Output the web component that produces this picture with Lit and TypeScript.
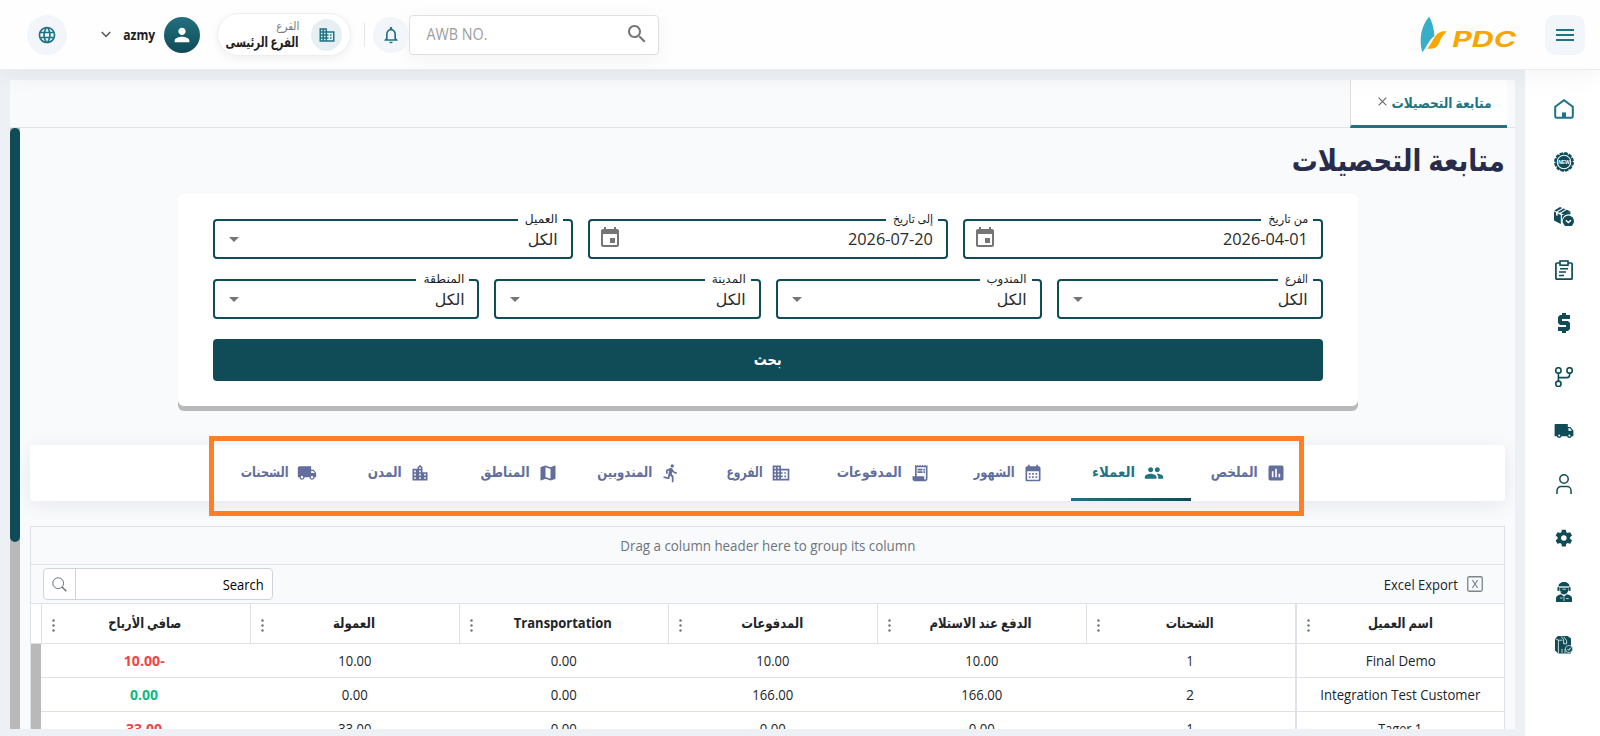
import { LitElement, html, css, svg } from 'lit';
import { customElement, property } from 'lit/decorators.js';
import { classMap } from 'lit/directives/class-map.js';

const PATHS: Record<string, string> = {
    language: 'M11.99 2C6.47 2 2 6.48 2 12s4.47 10 9.99 10C17.52 22 22 17.52 22 12S17.52 2 11.99 2zm6.93 6h-2.95c-.32-1.25-.78-2.45-1.38-3.56 1.84.63 3.37 1.91 4.33 3.56zM12 4.04c.83 1.2 1.48 2.53 1.91 3.96h-3.82c.43-1.43 1.08-2.76 1.91-3.96zM4.26 14C4.1 13.36 4 12.69 4 12s.1-1.36.26-2h3.38c-.08.66-.14 1.32-.14 2 0 .68.06 1.34.14 2H4.26zm.82 2h2.95c.32 1.25.78 2.45 1.38 3.56-1.84-.63-3.37-1.9-4.33-3.56zm2.95-8H5.08c.96-1.66 2.49-2.93 4.33-3.56C8.81 5.55 8.35 6.75 8.03 8zM12 19.96c-.83-1.2-1.48-2.53-1.91-3.96h3.82c-.43 1.43-1.08 2.76-1.91 3.96zM14.34 14H9.66c-.09-.66-.16-1.32-.16-2 0-.68.07-1.35.16-2h4.68c.09.65.16 1.32.16 2 0 .68-.07 1.34-.16 2zm.25 5.56c.6-1.11 1.06-2.31 1.38-3.56h2.95c-.96 1.65-2.49 2.93-4.33 3.56zM16.36 14c.08-.66.14-1.32.14-2 0-.68-.06-1.34-.14-2h3.38c.16.64.26 1.31.26 2s-.1 1.36-.26 2h-3.38z',
    business: 'M12 7V3H2v18h20V7H12zM6 19H4v-2h2v2zm0-4H4v-2h2v2zm0-4H4V9h2v2zm0-4H4V5h2v2zm4 12H8v-2h2v2zm0-4H8v-2h2v2zm0-4H8V9h2v2zm0-4H8V5h2v2zm10 12h-8v-2h2v-2h-2v-2h2v-2h-2V9h8v10zm-2-8h-2v2h2v-2zm0 4h-2v2h2v-2z',
    person: 'M12 12c2.21 0 4-1.79 4-4s-1.79-4-4-4-4 1.79-4 4 1.79 4 4 4zm0 2c-2.67 0-8 1.34-8 4v2h16v-2c0-2.66-5.33-4-8-4z',
    bell: 'M12 22c1.1 0 2-.9 2-2h-4c0 1.1.9 2 2 2zm6-6v-5c0-3.07-1.63-5.64-4.5-6.32V4c0-.83-.67-1.5-1.5-1.5s-1.5.67-1.5 1.5v.68C7.64 5.36 6 7.92 6 11v5l-2 2v1h16v-1l-2-2zm-2 1H8v-6c0-2.48 1.51-4.5 4-4.5s4 2.02 4 4.5v6z',
    search: 'M15.5 14h-.79l-.28-.27C15.41 12.59 16 11.11 16 9.5 16 5.91 13.09 3 9.5 3S3 5.91 3 9.5 5.91 16 9.5 16c1.61 0 3.09-.59 4.23-1.57l.27.28v.79l5 4.99L20.49 19l-4.99-5zm-6 0C7.01 14 5 11.99 5 9.5S7.01 5 9.5 5 14 7.01 14 9.5 11.99 14 9.5 14z',
    menu: 'M3 18h18v-2H3v2zm0-5h18v-2H3v2zm0-7v2h18V6H3z',
    event: 'M17 12h-5v5h5v-5zM16 1v2H8V1H6v2H5c-1.11 0-1.99.9-1.99 2L3 19c0 1.1.89 2 2 2h14c1.1 0 2-.9 2-2V5c0-1.1-.9-2-2-2h-1V1h-2zm3 18H5V8h14v11z',
    assessment: 'M19 3H5c-1.1 0-2 .9-2 2v14c0 1.1.9 2 2 2h14c1.1 0 2-.9 2-2V5c0-1.1-.9-2-2-2zM9 17H7v-7h2v7zm4 0h-2V7h2v10zm4 0h-2v-4h2v4z',
    people: 'M16 11c1.66 0 2.99-1.34 2.99-3S17.66 5 16 5c-1.66 0-3 1.34-3 3s1.34 3 3 3zm-8 0c1.66 0 2.99-1.34 2.99-3S9.66 5 8 5C6.34 5 5 6.34 5 8s1.34 3 3 3zm0 2c-2.33 0-7 1.17-7 3.5V19h14v-2.5c0-2.33-4.67-3.5-7-3.5zm8 0c-.29 0-.62.02-.97.05 1.16.84 1.97 1.97 1.97 3.45V19h6v-2.5c0-2.33-4.67-3.5-7-3.5z',
    calendar: 'M19 4h-1V2h-2v2H8V2H6v2H5c-1.11 0-1.99.9-1.99 2L3 20c0 1.1.89 2 2 2h14c1.1 0 2-.9 2-2V6c0-1.1-.9-2-2-2zm0 16H5V10h14v10zM9 14H7v-2h2v2zm4 0h-2v-2h2v2zm4 0h-2v-2h2v2zm-8 4H7v-2h2v2zm4 0h-2v-2h2v2zm4 0h-2v-2h2v2z',
    receipt: 'M19.5 3.5L18 2l-1.5 1.5L15 2l-1.5 1.5L12 2l-1.5 1.5L9 2 7.5 3.5 6 2v14H3v3c0 1.66 1.34 3 3 3h12c1.66 0 3-1.34 3-3V2l-1.5 1.5zM19 19c0 .55-.45 1-1 1s-1-.45-1-1v-3H8V5h11v14zM9 7h6v2H9zM16 7h2v2h-2zM9 10h6v2H9zM16 10h2v2h-2z',
    run: 'M13.49 5.48c1.1 0 2-.9 2-2s-.9-2-2-2-2 .9-2 2 .9 2 2 2zm-3.6 13.9l1-4.4 2.1 2v6h2v-7.5l-2.1-2 .6-3c1.3 1.5 3.3 2.5 5.5 2.5v-2c-1.9 0-3.5-1-4.3-2.4l-1-1.6c-.4-.6-1-1-1.7-1-.3 0-.5.1-.8.1l-5.2 2.2v4.7h2v-3.4l1.8-.7-1.6 8.1-4.9-1-.4 2 7 1.4z',
    map: 'M20.5 3l-.16.03L15 5.1 9 3 3.36 4.9c-.21.07-.36.25-.36.48V20.5c0 .28.22.5.5.5l.16-.03L9 18.9l6 2.1 5.64-1.9c.21-.07.36-.25.36-.48V3.5c0-.28-.22-.5-.5-.5zM15 19l-6-2.11V5l6 2.11V19z',
    city: 'M15 11V5l-3-3-3 3v2H3v14h18V11h-6zm-8 8H5v-2h2v2zm0-4H5v-2h2v2zm0-4H5V9h2v2zm6 8h-2v-2h2v2zm0-4h-2v-2h2v2zm0-4h-2V9h2v2zm0-4h-2V5h2v2zm6 12h-2v-2h2v2zm0-4h-2v-2h2v2z',
    truck: 'M20 8h-3V4H3c-1.1 0-2 .9-2 2v11h2c0 1.66 1.34 3 3 3s3-1.34 3-3h6c0 1.66 1.34 3 3 3s3-1.34 3-3h2v-5l-3-4zM6 18.5c-.83 0-1.5-.67-1.5-1.5s.67-1.5 1.5-1.5 1.5.67 1.5 1.5-.67 1.5-1.5 1.5zm13.5-9l1.96 2.5H17V9.5h2.5zm-1.5 9c-.83 0-1.5-.67-1.5-1.5s.67-1.5 1.5-1.5 1.5.67 1.5 1.5-.67 1.5-1.5 1.5z',
    settings: 'M19.14 12.94c.04-.3.06-.61.06-.94 0-.32-.02-.64-.07-.94l2.03-1.58c.18-.14.23-.41.12-.61l-1.92-3.32c-.12-.22-.37-.29-.59-.22l-2.39.96c-.5-.38-1.03-.7-1.62-.94l-.36-2.54c-.04-.24-.24-.41-.48-.41h-3.84c-.24 0-.43.17-.47.41l-.36 2.54c-.59.24-1.13.57-1.62.94l-2.39-.96c-.22-.08-.47 0-.59.22L2.74 8.87c-.12.21-.08.47.12.61l2.03 1.58c-.05.3-.09.63-.09.94s.02.64.07.94l-2.03 1.58c-.18.14-.23.41-.12.61l1.92 3.32c.12.22.37.29.59.22l2.39-.96c.5.38 1.03.7 1.62.94l.36 2.54c.05.24.24.41.48.41h3.84c.24 0 .44-.17.47-.41l.36-2.54c.59-.24 1.13-.56 1.62-.94l2.39.96c.22.08.47 0 .59-.22l1.92-3.32c.12-.22.07-.47-.12-.61l-2.01-1.58zM12 15.2a3.2 3.2 0 1 1 0-6.4 3.2 3.2 0 0 1 0 6.4z',
};

const icon = (name: string, size = 20) => html`
    <svg width=${size} height=${size} viewBox="0 0 24 24" fill="currentColor"><path d=${PATHS[name]}></path></svg>
`;

// side menu drawings, all on a 20x20 box
const MENU = [
    svg`<path d="M1.2 7.8 10 1.2l8.8 6.6v9.6a1.4 1.4 0 0 1-1.4 1.4H2.6a1.4 1.4 0 0 1-1.4-1.4z" fill="none" stroke="#1f7483" stroke-width="2"/><path d="M8 13.4h4V19H8z" fill="#1f7483"/>`,
    svg`<circle cx="10" cy="10" r="8.7" fill="none" stroke="currentColor" stroke-width="2.4" stroke-dasharray="3.4 1.155"/>
        <circle cx="10" cy="10" r="8" fill="none" stroke="currentColor" stroke-width="1.4"/><circle cx="10" cy="10" r="6.2" fill="currentColor"/>
        <text x="10" y="11.8" font-family="Liberation Sans" font-size="5" font-weight="700" text-anchor="middle" fill="#fff">NEW</text>`,
    svg`<path d="M.2 4.4 6 1l2.2.9-5.8 3.5zM3.6 5.9l6-3.4 2 .8-5.8 3.5zM7 7.3l5.8-3.5 3.4 1.4-6 3.7zM0 5.6l2 .9v2.8l1.6.8V7.4l3.2 1.5v9.1L0 14.4zM8 9l2.2-.2 6.2-3.2v3A6.4 6.4 0 0 0 8.2 16l-.2 1z" fill="currentColor"/>
        <circle cx="14.4" cy="15.2" r="5.6" fill="currentColor"/><path d="m11.8 14.2 2.6 2.4 2.6-2.4" fill="none" stroke="#fff" stroke-width="1.5"/>`,
    svg`<rect x="1.9" y="3" width="16.2" height="16.2" rx="1" fill="none" stroke="currentColor" stroke-width="1.7"/>
        <rect x="6" y="1" width="8" height="4.2" fill="#fff" stroke="currentColor" stroke-width="1.6"/>
        <path d="M6 8.8h8M5 12h7M5 15.6h5" stroke="currentColor" stroke-width="1.5"/>`,
    svg`<path d="M8 0h4v2h4v4H8v2h6l2 2v6l-2 2h-2v2H8v-2H4v-4h8v-2H6l-2-2V4l2-2h2z" fill="currentColor"/>`,
    svg`<g fill="none" stroke="currentColor" stroke-width="1.6"><circle cx="4.4" cy="3.4" r="2.7"/><circle cx="15.6" cy="3.4" r="2.7"/><circle cx="4.4" cy="16.8" r="2.7"/><path d="M4.4 6.1v8M4.4 10.6h8.6c1.6 0 2.6-1 2.6-2.6V6.1"/></g>`,
    svg`<path d="M.6 4.2c0-.8.5-1.2 1.2-1.2h12v3h2.6l3 3.6v5.6h-1.6a2.5 2.5 0 0 1-4.8 0H7.6a2.5 2.5 0 0 1-4.8 0H.6zM14.4 7.2v2.6h3.6l-2-2.6z" fill="currentColor" fill-rule="evenodd"/><circle cx="5.2" cy="14.4" r="1" fill="#fff"/><circle cx="15.4" cy="14.4" r="1" fill="#fff"/>`,
    svg`<g fill="none" stroke="currentColor" stroke-width="1.5"><circle cx="10" cy="5" r="4.2"/><path d="M3 20v-3.400a4 4 0 0 1 4-4h6a4 4 0 0 1 4 4V20"/></g>`,
    svg`<path d=${PATHS.settings} transform="translate(-.6 -.4) scale(.87)" fill="currentColor"/>`,
    svg`<path d="M4.4 4.6C4.6 1.6 7 0 10 0s5.400 1.600 5.600 4.600zM5.400 5.600h9.200c0 4-1.600 7-4.600 7s-4.600-3-4.600-7zM2 20v-3.600c0-1.900 1.400-3.400 5-4.200l3 2.200 3-2.200c3.600.8 5 2.300 5 4.200V20z" fill="currentColor"/>
        <path d="M4.200 5h11.600M10 14.600V19M6 16h2.600M12 16.600h2.600M5.600 6.200v3.600h1.800M8.300 7.200h3.600" fill="none" stroke="#cfdde0" stroke-width=".9"/><rect x="3.400" y="5" width="2" height="4" rx="1" fill="currentColor"/><rect x="14.600" y="5" width="2" height="4" rx="1" fill="currentColor"/>`,
    svg`<path d="M1 3.400 4 1h9.500l3.500 2.400V18.400H4.200L1 15.600z" fill="currentColor"/><path d="m1 3.400 3.400 1.800V18M4.400 5.200h4M7 1.400l2.600 3.200v4.200h3V5.600L9.500 1.600M8 13.800v4M11 13.800v4" fill="none" stroke="#dbe6e8" stroke-width=".9"/>
        <circle cx="15" cy="14" r="3.600" fill="currentColor" stroke="#dbe6e8" stroke-width=".8"/><path d="m13.500 14 1.200 1.300 2-2.600" fill="none" stroke="#fff" stroke-width="1"/>`,
];

const TABS = [
    { label: 'الملخص', icon: 'assessment', w: 47 },
    { label: 'العملاء', icon: 'people', w: 43, active: true },
    { label: 'الشهور', icon: 'calendar', w: 41 },
    { label: 'المدفوعات', icon: 'receipt', w: 65 },
    { label: 'الفروع', icon: 'business', w: 36 },
    { label: 'المندوبين', icon: 'run', w: 55 },
    { label: 'المناطق', icon: 'map', w: 49 },
    { label: 'المدن', icon: 'city', w: 34 },
    { label: 'الشحنات', icon: 'truck', w: 48 },
];

const COLUMNS = [
    { label: 'اسم العميل', w: 65 },
    { label: 'الشحنات', w: 48 },
    { label: 'الدفع عند الاستلام', w: 102 },
    { label: 'المدفوعات', w: 62 },
    { label: 'Transportation', w: 98 },
    { label: 'العمولة', w: 42 },
    { label: 'صافي الأرباح', w: 73 },
];

// value and drawn width of every cell
const ROWS: [string, number][][] = [
    [['Final Demo', 70], ['1', 7], ['10.00', 33], ['10.00', 33], ['0.00', 26], ['10.00', 33], ['-10.00', 41]],
    [['Integration Test Customer', 160], ['2', 8], ['166.00', 41], ['166.00', 41], ['0.00', 26], ['0.00', 26], ['0.00', 28]],
    [['Tager 1', 44], ['1', 7], ['0.00', 26], ['0.00', 26], ['0.00', 26], ['33.00', 33], ['33.00', 36]],
];

/** One line of text condensed or stretched to a given width. */
@customElement('fit-text')
export class FitText extends LitElement {
    static styles = css`
        :host {
            display: inline-flex;
            justify-content: center;
            flex: none;
            white-space: nowrap;
        }
        span {
            flex: none;
        }
    `;

    @property({ type: Number }) w = 0;
    @property() text = '';

    updated() {
        const span = this.renderRoot.querySelector('span') as HTMLElement;
        this.style.width = `${this.w}px`;
        span.style.transform = `scaleX(${this.w / span.getBoundingClientRect().width})`;
    }

    render() {
        return html`<span>${this.text}</span>`;
    }
}

@customElement('form-field')
export class FormField extends LitElement {
    static styles = css`
        :host {
            position: relative;
            display: flex;
            align-items: center;
            justify-content: space-between;
            box-sizing: border-box;
            height: 40px;
            padding: 0 13px 0 8px;
            border: 2px solid #0f4c57;
            border-radius: 4px;
            font-size: 15.5px;
            color: #2b2b2b;
        }
        .label {
            position: absolute;
            top: -9px;
            right: 8px;
            padding: 0 5px 0 7px;
            height: 16px;
            line-height: 14px;
            background: #fff;
            color: #1d1d1d;
            font-size: 12px;
        }
        svg {
            color: #757575;
            margin-top: -2px;
        }
        .arrow {
            margin: 1px 0 0 6px;
        }
    `;

    @property() label = '';
    @property({ type: Number }) lw = 30;
    @property() value = 'الكل';
    @property({ type: Number }) vw = 30;
    @property({ type: Boolean }) date = false;

    render() {
        return html`
            <span class="label"><fit-text .w=${this.lw} .text=${this.label}></fit-text></span>
            <fit-text .w=${this.vw} .text=${this.value}></fit-text>
            ${this.date
                ? icon('event', 24)
                : html`<svg class="arrow" width="10" height="5" viewBox="0 0 10 5"><path d="M0 0h10L5 5z" fill="currentColor"></path></svg>`}
        `;
    }
}

@customElement('app-root')
export class AppRoot extends LitElement {
    static styles = css`
        :host {
            display: grid;
            grid-template-rows: 70px 1fr;
            height: 736px;
            overflow: hidden;
            direction: rtl;
            background: #edf1f6;
            color: #212529;
            font-family: 'Open Sans', 'DejaVu Sans', sans-serif;
        }
        svg {
            display: block;
            flex: none;
        }
        header {
            position: relative;
            z-index: 1;
            display: flex;
            align-items: center;
            box-sizing: border-box;
            padding: 0 15px 0 27px;
            background: #fefefe;
            border-bottom: 1px solid #e9edf0;
            box-shadow: 0 4px 28px rgba(0, 0, 0, 0.05);
            color: #1f7483;
        }
        .menu-button,
        .round {
            display: grid;
            place-items: center;
            width: 40px;
            height: 40px;
            border-radius: 10px;
            background: #f2f6fa;
        }
        .round {
            border-radius: 50%;
        }
        .logo {
            display: flex;
            align-items: flex-start;
            gap: 5px;
            margin: 0 29px 0 auto;
            height: 38px;
            direction: ltr;
            color: #f7a600;
            font: italic 700 21px/30px Inter, sans-serif;
        }
        .logo fit-text {
            margin-top: 9px;
        }
        .awb {
            display: flex;
            align-items: center;
            justify-content: space-between;
            box-sizing: border-box;
            width: 250px;
            height: 40px;
            padding: 0 9px 1px 16px;
            direction: ltr;
            background: #fff;
            border: 1px solid #e0e0e0;
            border-radius: 4px;
            box-shadow: 0 4px 20px rgba(0, 0, 0, 0.05);
            color: #9e9e9e;
            font-size: 15.5px;
        }
        .awb svg {
            color: #757575;
        }
        .bell {
            width: 36px;
            height: 36px;
        }
        .divider {
            width: 1px;
            height: 24px;
            margin: 0 8px 0 13px;
            background: #e4e7ea;
        }
        .branch {
            display: flex;
            align-items: center;
            gap: 12px;
            box-sizing: border-box;
            width: 134px;
            height: 43px;
            padding: 0 8px;
            background: #fff;
            border: 1px solid #eceff1;
            border-radius: 22px;
            box-shadow: 0 3px 10px rgba(0, 0, 0, 0.06);
        }
        .branch .round {
            width: 32px;
            height: 32px;
            background: #e6f0f3;
        }
        .branch-text {
            display: flex;
            flex-direction: column;
            color: #212121;
            font-size: 14px;
            font-weight: 700;
            line-height: 17px;
        }
        .branch-text .caption {
            color: #777;
            font-size: 11.5px;
            font-weight: 400;
            line-height: 14px;
        }
        .avatar {
            display: grid;
            place-items: center;
            width: 36px;
            height: 36px;
            margin: 0 17px 0 9px;
            border-radius: 50%;
            background: linear-gradient(#22707f, #0f4c57);
            color: #fff;
        }
        .user {
            color: #212121;
            font-size: 14.5px;
            font-weight: 700;
        }
        .chevron {
            margin: 0 12px 0 34px;
        }
        .body {
            display: flex;
            min-height: 0;
        }
        nav {
            display: flex;
            flex-direction: column;
            align-items: center;
            gap: 33.7px;
            box-sizing: border-box;
            width: 75px;
            padding: 28.6px 0 0 3px;
            background: #fff;
            color: #0f4c57;
        }
        main {
            display: flex;
            flex-direction: column;
            flex: 1;
            min-width: 0;
            margin: 10px 10px 7px;
            background: #f8fafc;
        }
        .page-tabs {
            flex: none;
            box-sizing: border-box;
            display: flex;
            height: 48px;
            padding-right: 8px;
            border-bottom: 1px solid #e2e6ea;
        }
        .page-tab {
            display: flex;
            align-items: center;
            gap: 4px;
            box-sizing: border-box;
            width: 157px;
            height: 48px;
            padding: 0 16px 0 0;
            background: #fff;
            border-left: 1px solid #ddd;
            border-bottom: 3px solid #1f7483;
            color: #1f7483;
            font-size: 14px;
            font-weight: 700;
        }
        .page-tab svg {
            margin-top: -2px;
        }
        .view {
            display: flex;
            flex: 1;
            min-height: 0;
        }
        .scrollbar {
            flex: none;
            width: 10px;
            background: #b9b9b9;
        }
        .thumb {
            height: 414px;
            border-radius: 5px;
            background: #0f4c57;
        }
        .content {
            flex: 1;
            min-width: 0;
            padding: 0 10px;
            overflow: hidden;
        }
        h1 {
            margin: 0;
            height: 66px;
            font-size: 30px;
            line-height: 64px;
            color: #282c4b;
        }
        .filters {
            display: flex;
            flex-direction: column;
            gap: 20px;
            box-sizing: border-box;
            width: 1180px;
            margin: 0 147px 0 auto;
            padding: 25px 35px;
            background: #fff;
            border-radius: 6px;
            box-shadow: 0 5px 0 #b9b9b9;
        }
        .fields {
            display: flex;
            gap: 15px;
        }
        .fields form-field {
            flex: 1;
        }
        .submit {
            display: grid;
            place-items: center;
            height: 42px;
            border-radius: 4px;
            background: #0f4c57;
            color: #fff;
            font-size: 15.5px;
            font-weight: 700;
        }
        .submit fit-text {
            margin-top: -2px;
        }
        .sections {
            position: relative;
            display: flex;
            justify-content: center;
            box-sizing: border-box;
            height: 56px;
            margin-top: 39px;
            padding-right: 2px;
            background: #fff;
            border-radius: 4px;
            box-shadow: 0 4px 20px rgba(30, 40, 60, 0.08);
        }
        .section {
            display: flex;
            align-items: center;
            justify-content: center;
            gap: 8px;
            box-sizing: border-box;
            min-width: 120px;
            padding: 2px 21px 0 15px;
            border-bottom: 3px solid transparent;
            color: #626e9b;
            font-size: 14px;
            font-weight: 700;
        }
        .section fit-text {
            margin-top: -2px;
        }
        .section.active {
            color: #1f7483;
            border-image: linear-gradient(to right, #1f7483, #0f4c57) 1;
            border-width: 0 0 3px;
            border-style: solid;
        }
        .highlight {
            position: absolute;
            left: 179px;
            top: -9px;
            box-sizing: border-box;
            width: 1095px;
            height: 80px;
            border: 5px solid #ff7f27;
        }
        .grid {
            margin-top: 25px;
            height: 240px;
            border: 1px solid #dee2e6;
            font-size: 14px;
        }
        .group-drop {
            display: grid;
            place-items: center;
            height: 37px;
            border-bottom: 1px solid #dee2e6;
            color: #6c757d;
        }
        .toolbar {
            display: flex;
            align-items: center;
            gap: 9px;
            height: 38px;
            padding: 0 21px 0 12px;
            border-bottom: 1px solid #dee2e6;
        }
        .toolbar fit-text {
            margin-top: 1px;
        }
        .grid-search {
            display: flex;
            align-items: center;
            box-sizing: border-box;
            width: 230px;
            height: 32px;
            margin-right: auto;
            padding-right: 8px;
            background: #fff;
            border: 1px solid #ced4da;
            border-radius: 4px;
            color: #000;
        }
        .grid-search .go {
            display: grid;
            place-items: center;
            width: 31px;
            height: 30px;
            margin-right: auto;
            border-right: 1px solid #ced4da;
        }
        .row {
            display: grid;
            grid-template-columns: repeat(7, 209px) 10px;
            height: 33px;
            background: #fff;
            border-bottom: 1px solid #dee2e6;
        }
        .cell {
            display: grid;
            place-items: center;
            box-sizing: border-box;
        }
        .cell:first-child {
            border-left: 2px solid #dee2e6;
        }
        .row.head {
            height: 39px;
            font-weight: 700;
        }
        .head .cell {
            position: relative;
            padding: 0 2px 2px 0;
            border-left: 1px solid #dee2e6;
        }
        .head .cell:first-child {
            padding-right: 0;
            border-left-width: 2px;
        }
        .dots {
            position: absolute;
            left: 10px;
            top: 15px;
        }
        .gutter {
            background: #b9b9b9;
            margin-bottom: -1px;
        }
        .last {
            padding-right: 2px;
            font-weight: 700;
            color: #10b981;
        }
        .last.loss {
            color: #ef4444;
        }
    `;

    render() {
        return html`
            ${this._header()}
            <div class="body">
                <nav>${MENU.map((m) => html`<svg width="20" height="20" viewBox="0 0 20 20">${m}</svg>`)}</nav>
                <main>
                    <div class="page-tabs">
                        <div class="page-tab">
                            <fit-text .w=${100} .text=${'متابعة التحصيلات'}></fit-text>
                            <svg width="9" height="9" viewBox="0 0 9 9"><path d="M.6.6l7.800 7.800M8.400.6.6 8.400" stroke="#666" stroke-width="1.100"></path></svg>
                        </div>
                    </div>
                    <div class="view">
                        <div class="content">
                            <h1><fit-text .w=${213} .text=${'متابعة التحصيلات'}></fit-text></h1>
                            ${this._filters()} ${this._sections()} ${this._grid()}
                        </div>
                        <div class="scrollbar"><div class="thumb"></div></div>
                    </div>
                </main>
            </div>
        `;
    }

    _header() {
        return html`
            <header>
                <div class="menu-button">${icon('menu', 24)}</div>
                <div class="logo">
                    <svg width="27" height="38" viewBox="0 0 27 38">
                        <path d="M9.300.5C3.500 7-2.200 20 2.300 36.300 7.500 30 8.500 24.500 14.400 20 14 12 12 6 9.300.5z" fill="#39aec9"></path>
                        <path d="M26.800 15.300h-4C16 16.500 14.500 22 11.500 26.500L7.500 32.800c5.500.4 9.500-1 11.300-5.300 1.600-4 4-8.500 8-12.200z" fill="#f7a600"></path>
                    </svg>
                    <fit-text .w=${64} .text=${'PDC'}></fit-text>
                </div>
                <div class="awb"><fit-text .w=${61} .text=${'AWB NO.'}></fit-text>${icon('search', 24)}</div>
                <div class="round bell">${icon('bell')}</div>
                <div class="divider"></div>
                <div class="branch">
                    <div class="round">${icon('business', 18)}</div>
                    <div class="branch-text">
                        <span class="caption"><fit-text .w=${23} .text=${'الفرع'}></fit-text></span>
                        <fit-text .w=${73} .text=${'الفرع الرئيسى'}></fit-text>
                    </div>
                </div>
                <div class="avatar">${icon('person', 22)}</div>
                <div class="user"><fit-text .w=${32} .text=${'azmy'}></fit-text></div>
                <svg class="chevron" width="10" height="7" viewBox="0 0 10 7"><path d="m.8 1 4.200 4.400L9.200 1" fill="none" stroke="#555" stroke-width="1.500"></path></svg>
                <div class="round">${icon('language')}</div>
            </header>
        `;
    }

    _filters() {
        return html`
            <div class="filters">
                <div class="fields">
                    <form-field label="من تاريخ" lw="40" value="2026-04-01" vw="85" date></form-field>
                    <form-field label="إلى تاريخ" lw="40" value="2026-07-20" vw="85" date></form-field>
                    <form-field label="العميل" lw="33"></form-field>
                </div>
                <div class="fields">
                    <form-field label="الفرع" lw="23"></form-field>
                    <form-field label="المندوب" lw="40"></form-field>
                    <form-field label="المدينة" lw="34"></form-field>
                    <form-field label="المنطقة" lw="41"></form-field>
                </div>
                <div class="submit"><fit-text .w=${28} .text=${'بحث'}></fit-text></div>
            </div>
        `;
    }

    _sections() {
        return html`
            <div class="sections">
                ${TABS.map((t) => html`
                    <div class=${classMap({ section: true, active: !!t.active })}>
                        ${icon(t.icon)}<fit-text .w=${t.w} .text=${t.label}></fit-text>
                    </div>
                `)}
                <div class="highlight"></div>
            </div>
        `;
    }

    _grid() {
        return html`
            <div class="grid">
                <div class="group-drop"><fit-text .w=${295} .text=${'Drag a column header here to group its column'}></fit-text></div>
                <div class="toolbar">
                    <svg width="16" height="16" viewBox="0 0 16 16">
                        <rect x=".75" y=".75" width="14.500" height="14.500" rx="1.500" fill="none" stroke="#7b858e" stroke-width="1.300"></rect>
                        <path d="m5.300 4 5.400 8M10.700 4l-5.400 8" stroke="#7b858e" stroke-width="1.200"></path>
                    </svg>
                    <fit-text .w=${74} .text=${'Excel Export'}></fit-text>
                    <div class="grid-search">
                        <fit-text .w=${41} .text=${'Search'}></fit-text>
                        <div class="go">
                            <svg width="15" height="15" viewBox="0 0 15 15"><circle cx="6.200" cy="6.200" r="5.400" fill="none" stroke="#6c757d"></circle><path d="m10 10 4.300 4.300" stroke="#6c757d" stroke-width="1.500"></path></svg>
                        </div>
                    </div>
                </div>
                <div class="row head">
                    ${COLUMNS.map((c) => html`
                        <div class="cell">
                            <fit-text .w=${c.w} .text=${c.label}></fit-text>
                            <svg class="dots" width="3" height="13" viewBox="0 0 3 13" fill="#6c757d">
                                <circle cx="1.500" cy="1.500" r="1.200"></circle><circle cx="1.500" cy="6.500" r="1.200"></circle><circle cx="1.500" cy="11.500" r="1.200"></circle>
                            </svg>
                        </div>
                    `)}
                </div>
                ${ROWS.map((row, r) => html`
                    <div class="row">
                        ${row.map(([text, w], i) => html`
                            <div class=${classMap({ cell: true, last: i === 6, loss: i === 6 && r !== 1 })}>
                                <fit-text .w=${w} .text=${text}></fit-text>
                            </div>
                        `)}
                        <div class="gutter"></div>
                    </div>
                `)}
            </div>
        `;
    }
}
